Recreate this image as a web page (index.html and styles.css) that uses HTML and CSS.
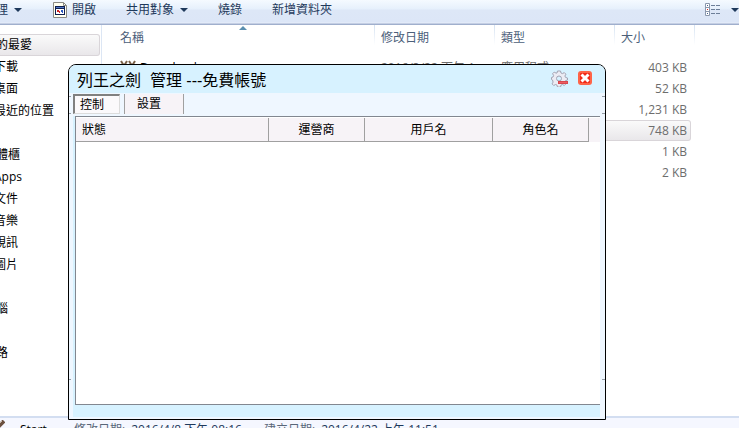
FILE: index.html
```html
<!DOCTYPE html>
<html lang="zh-Hant">
<head>
  <meta charset="UTF-8">
  <title>列王之劍 管理</title>
  <link rel="stylesheet" href="styles.css">
</head>
<body>
<header class="toolbar">
  <button class="tool">管理 <span class="arrow"></span></button>
  <button class="tool">
    <svg class="app-icon" width="14" height="16" viewBox="0 0 14 16">
      <path d="M.5.5h10l3 3v12H.5z" fill="#fffff0" stroke="#8a8a84"/>
      <path d="M10.500.500v3h3" fill="none" stroke="#8a8a84"/>
      <path d="M2 4h10v9H2z" fill="#10204f"/>
      <path d="M3 7h8v5H3z" fill="#fff"/>
      <path d="M3 5h8v1H3z" fill="#4d76c8"/>
      <path d="M4 8h2v1H4zM4 9h3v1H4zM6 10h1v1H6z" fill="#c22"/>
      <path d="M8 8h2v2H8zM9 10h1v1H9z" fill="#2a58c0"/>
    </svg>
    開啟
  </button>
  <button class="tool">共用對象 <span class="arrow"></span></button>
  <button class="tool">燒錄</button>
  <button class="tool">新增資料夾</button>
  <button class="tool view" aria-label="檢視">
    <svg width="15" height="13" viewBox="0 0 15 13">
      <path d="M.5.5h4v12h-4zM.5 4.500h4M.5 8.500h4" fill="#fff" stroke="#8b98ad"/>
      <path d="M2 2h1v1H2zM2 10h1v1H2z" fill="#41608c"/>
      <path d="M2 6h1v1H2z" fill="#d22"/>
      <path d="M6 2h4v1H6zM11 2h4v1h-4zM6 6h4v1H6zM11 6h4v1h-4zM6 10h4v1H6zM11 10h4v1h-4z" fill="#6d7f99"/>
    </svg>
    <span class="arrow"></span>
  </button>
</header>

<main class="explorer">
  <nav class="sidebar">
    <div class="group selected">我的最愛</div>
    <ul>
      <li>下載</li>
      <li>桌面</li>
      <li>最近的位置</li>
    </ul>
    <div class="group">媒體櫃</div>
    <ul>
      <li>Apps</li>
      <li>文件</li>
      <li>音樂</li>
      <li>視訊</li>
      <li>圖片</li>
    </ul>
    <div class="group">電腦</div>
    <div class="group spaced">網路</div>
  </nav>

  <div class="files">
    <table class="file-table">
      <colgroup><col class="c-name"><col class="c-date"><col class="c-type"><col class="c-size"><col class="c-end"></colgroup>
      <thead>
        <tr><th class="sorted">名稱</th><th>修改日期</th><th>類型</th><th colspan="2">大小</th></tr>
      </thead>
      <tbody>
        <tr>
          <td>
            <svg class="file-icon" width="16" height="14" viewBox="0 0 16 14">
              <path d="M1 1l5 8M7 1L2 9M9 1l5 8M15 1l-5 8" stroke="#7a6148" stroke-width="2" fill="none"/>
            </svg>Download
          </td>
          <td>2016/3/22 下午 1</td><td>應用程式</td><td class="size">403 KB</td>
        </tr>
        <tr><td></td><td></td><td></td><td class="size">52 KB</td></tr>
        <tr><td></td><td></td><td></td><td class="size">1,231 KB</td></tr>
        <tr class="selected"><td></td><td></td><td></td><td class="size">748 KB</td></tr>
        <tr><td></td><td></td><td></td><td class="size">1 KB</td></tr>
        <tr><td></td><td></td><td></td><td class="size">2 KB</td></tr>
      </tbody>
    </table>
  </div>
</main>

<footer class="details">
  <svg class="sword" width="12" height="12" viewBox="0 0 12 12">
    <path d="M11 1L2 10" stroke="#6b5040" stroke-width="4"/>
    <path d="M9 1L3 7" stroke="#c9b8a8" stroke-width="1"/>
  </svg>
  <span class="file-name">Start</span>
  <span class="label">修改日期:</span>
  <span class="value">2016/4/8 下午 08:16</span>
  <span class="label created">建立日期:</span>
  <span class="value">2016/4/22 上午 11:51</span>
</footer>

<section class="window">
  <div class="titlebar">
    <h1>列王之劍  管理 ---免費帳號</h1>
    <button class="icon-btn" aria-label="設定">
      <svg width="17" height="17" viewBox="0 0 17 17">
        <path d="M6.500 1h3l.5 2 1.500.600L13.300 2.600l1.600 1.600-1 1.800.600 1.400 2 .6v2l-2 .6-.6 1.500 1 1.800-1.600 1.600-1.800-1-1.500.600-.5 2h-3l-.5-2-1.500-.600-1.800 1-1.600-1.600 1-1.800L1.500 10l-1-.500v-2l1.500-.500.600-1.500-1-1.800 1.600-1.600 1.800 1L6 3z" fill="#ececf4" stroke="#a3a3b2"/>
        <circle cx="8" cy="8.500" r="2.500" fill="#d7f2ff" stroke="#a3a3b2"/>
        <path d="M7 11h10v3H7z" fill="#d8474c"/>
        <path d="M8 12h8v1H8z" fill="#ec5c62"/>
      </svg>
    </button>
    <button class="icon-btn" aria-label="關閉">
      <svg width="14" height="14" viewBox="0 0 14 14">
        <rect width="14" height="14" rx="3" fill="#ff6347"/>
        <rect x="2" y="2" width="10" height="10" rx="1" fill="#f02a18"/>
        <path d="M3.500 3.500l7 7M10.500 3.500l-7 7" stroke="#fff" stroke-width="3"/>
      </svg>
    </button>
  </div>
  <div class="tabs">
    <button class="tab active">控制</button>
    <button class="tab">設置</button>
  </div>
  <div class="frame">
    <div class="panel">
      <div class="list">
        <table class="account-table">
          <colgroup><col class="c-state"><col class="c-carrier"><col class="c-user"><col class="c-role"><col></colgroup>
          <thead>
            <tr><th class="first">狀態</th><th>運營商</th><th>用戶名</th><th>角色名</th><td></td></tr>
          </thead>
        </table>
      </div>
    </div>
  </div>
</section>
</body>
</html>
```
FILE: styles.css
```css
* {
  box-sizing: border-box;
}
body {
  margin: 0;
  height: 100vh;
  display: flex;
  flex-direction: column;
  position: relative;
  overflow: hidden;
  background: #fff;
  color: #000;
  font: 12px/20px "Open Sans", "Noto Sans CJK TC", sans-serif;
}
button {
  margin: 0;
  padding: 0;
  border: 0;
  background: none;
  color: inherit;
  font: inherit;
}

/* explorer toolbar */
.toolbar {
  flex: none;
  display: flex;
  align-items: center;
  gap: 30px;
  height: 25px;
  padding-bottom: 6px;
  margin-left: -16px;
  background: linear-gradient(#f5faff 0, #e6f0fc 9px, #dde7f7 10px, #dce6f7 22px, #e8eefa 23px, #a0afcd 24px);
  color: #1e395b;
}
.tool {
  display: flex;
  align-items: center;
  gap: 6px;
  white-space: nowrap;
}
.tool .app-icon {
  margin-left: 1px;
  margin-right: -1px;
}
.view {
  gap: 11px;
  margin-left: auto;
}
.arrow {
  border: 4px solid transparent;
  border-top-color: #1e395b;
  border-bottom: 0;
}

/* explorer body */
.explorer {
  flex: 1;
  display: flex;
  min-height: 0;
}
.sidebar {
  flex: none;
  width: 102px;
  padding-top: 9px;
  border-right: 1px solid #dce6f4;
  line-height: 22px;
  overflow: hidden;
  white-space: nowrap;
}
.sidebar ul {
  list-style: none;
  margin: 0 0 22px;
  padding: 0;
}
.sidebar li {
  text-indent: -6px;
}
.group {
  text-indent: -16px;
}
.group.selected {
  margin-right: 1px;
  height: 22px;
  line-height: 20px;
  border: 1px solid #d9d5d9;
  border-left: 0;
  border-radius: 0 3px 3px 0;
  background: linear-gradient(#fafafa, #e9e7ea);
}
.group.spaced {
  margin-top: 22px;
}
.files {
  flex: 1;
  min-width: 0;
}
.file-table {
  width: 593px;
  table-layout: fixed;
  border-collapse: separate;
  border-spacing: 0;
  color: #6d6d6d;
}
.c-name {
  width: 273px;
}
.c-date,
.c-type {
  width: 120px;
}
.c-size {
  width: 76px;
}
.c-end {
  width: 4px;
}
.file-table th {
  height: 32px;
  padding: 0 6px 6px;
  text-align: left;
  font-weight: normal;
  color: #4c607a;
  background: linear-gradient(#d5e2f2, #fff) right top / 1px 20px no-repeat;
}
.file-table th:first-child {
  padding-left: 18px;
}
.file-table .sorted {
  position: relative;
}
.sorted::after {
  content: "";
  position: absolute;
  top: 1px;
  left: 50%;
  border: 4px solid transparent;
  border-top: 0;
  border-bottom-color: #5b8fb0;
}
.file-table td {
  height: 21px;
  padding: 0 4px 0 6px;
  line-height: 19px;
  white-space: nowrap;
  overflow: hidden;
}
.file-table td:first-child {
  padding-left: 18px;
  color: #000;
}
.file-icon {
  margin-top: 2px;
  margin-right: 4px;
  vertical-align: top;
}
.file-table .size {
  text-align: right;
}
.file-table .selected td {
  border: solid #d9d5d9;
  border-width: 1px 0;
  background: linear-gradient(#fafafa, #e9e7ea);
}
.file-table .selected .size {
  padding-right: 3px;
  border-right-width: 1px;
  border-radius: 0 3px 3px 0;
}

/* details pane */
.details {
  flex: none;
  display: flex;
  align-items: flex-start;
  gap: 6px;
  height: 12px;
  overflow: hidden;
  white-space: nowrap;
  border-top: 2px solid #d3def1;
  background: #f5f7ff;
  color: #1e395b;
  line-height: 24px;
}
.sword {
  flex: none;
  margin-left: -7px;
  margin-top: 2px;
}
.file-name {
  width: 48px;
  margin-left: 9px;
  color: #000;
}
.label {
  color: #5a6779;
}
.created {
  margin-left: 16px;
}

/* bot window */
.window {
  position: absolute;
  top: 64px;
  right: 133px;
  bottom: 8px;
  left: 68px;
  display: flex;
  flex-direction: column;
  padding-bottom: 2px;
  border: 1px solid #000;
  border-radius: 8px 8px 0 0;
  background: #eff7ff;
  overflow: hidden;
  font-family: "Noto Sans CJK TC", sans-serif;
}
.titlebar {
  flex: none;
  display: flex;
  align-items: center;
  gap: 10px;
  height: 28px;
  padding: 0 13px 2px 8px;
  background: #d7f2ff;
}
.titlebar h1 {
  flex: 1;
  margin: 0;
  padding-top: 5px;
  font-family: "Liberation Sans", "Noto Sans CJK TC", sans-serif;
  font-size: 16px;
  font-weight: normal;
  line-height: 24px;
  white-space: pre;
}
.icon-btn {
  display: flex;
}
.tabs {
  flex: none;
  display: flex;
  gap: 4px;
  height: 23px;
  padding: 1px 0 2px 4px;
  background:
    linear-gradient(#949ca4, #949ca4) left 3px / 2px 1px no-repeat,
    linear-gradient(#949ca4, #949ca4) left 20px / 2px 1px no-repeat,
    linear-gradient(#949ca4, #949ca4) right 3px / 3px 1px no-repeat,
    linear-gradient(#949ca4, #949ca4) right 20px / 3px 1px no-repeat;
}
.tab {
  width: 60px;
  padding: 0 12px 2px;
  border: solid #a0a0a0;
  border-width: 0 1px;
  background: #f7f3f7;
  text-align: left;
  line-height: 18px;
}
.tab.active {
  width: 47px;
  height: 20px;
  padding: 0 5px 2px;
  border: 1px solid #dcdcdc;
  border-top: 2px solid #808080;
  border-left: 2px solid #808080;
  background: #fbf9fb;
  line-height: 15px;
}
.frame {
  flex: 1;
  display: flex;
  padding: 0 5px 0 4px;
  background:
    linear-gradient(#949ca4, #949ca4) left bottom 37px / 2px 1px no-repeat,
    linear-gradient(#949ca4, #949ca4) right bottom 37px / 3px 1px no-repeat;
}
.panel {
  flex: 1;
  display: flex;
  padding: 0 0 12px 2px;
  background: #d7f2ff;
}
.list {
  flex: 1;
  padding-top: 1px;
  border: 1px solid #828790;
  border-right: 0;
  background: #fff;
}
.account-table {
  width: 100%;
  table-layout: fixed;
  border-collapse: separate;
  border-spacing: 0;
  background: #f7f3f7;
}
.c-state {
  width: 193px;
}
.c-carrier,
.c-role {
  width: 96px;
}
.c-user {
  width: 128px;
}
.account-table th {
  height: 24px;
  padding: 0 0 2px;
  border: solid #a0a0a0;
  border-width: 0 1px 1px 0;
  font-weight: normal;
}
.account-table .first {
  padding-left: 6px;
  text-align: left;
}
```
